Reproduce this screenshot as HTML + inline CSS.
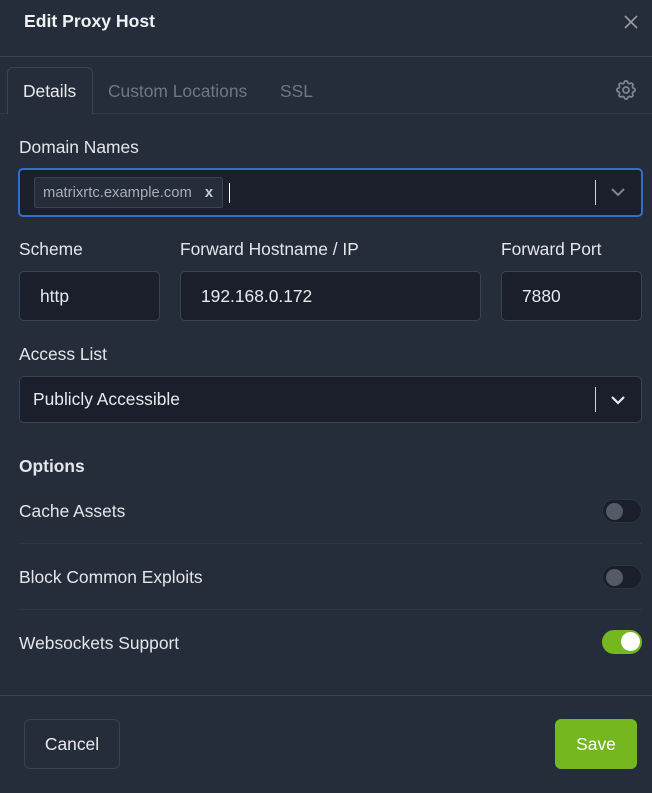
<!DOCTYPE html>
<html><head><style>
*{box-sizing:border-box;margin:0;padding:0}
body{width:652px;height:793px;background:#252d3a;font-family:"Liberation Sans",sans-serif;color:#e8eaed;position:relative;overflow:hidden;font-size:17.4px}
.a{position:absolute}
.inp{position:absolute;background:#1a1f2b;border:1px solid #3a4352;border-radius:5px;padding-left:20px;display:flex;align-items:center;font-size:17.4px}
.lbl{position:absolute;font-size:17.4px;color:#e3e6ea}
.tg{position:absolute;left:602px;width:40px;height:24px;border-radius:12px;background:#1a1f2b;border:1px solid #2c3442}
.tg::after{content:"";position:absolute;left:3px;top:3px;width:17px;height:17px;border-radius:50%;background:#555b66}
.tg.on{background:#74b71f;border-color:#74b71f}
.tg.on::after{left:18px;background:#fff;width:19px;height:19px;top:1px}
.sep{position:absolute;left:19px;right:10px;height:1px;background:#2f3745}
</style></head><body>
<div class="a" style="left:24px;top:11px;font-size:17.6px;font-weight:bold;color:#f0f2f4">Edit Proxy Host</div>
<svg class="a" style="left:623px;top:14px" width="16" height="16" viewBox="0 0 16 16"><path d="M2 2L14 14M14 2L2 14" stroke="#9aa0a8" stroke-width="1.6"/></svg>
<div class="a" style="left:0;top:56px;width:652px;height:1px;background:#3a4352"></div>
<div class="a" style="left:0;top:113px;width:652px;height:1px;background:#323a48"></div>
<div class="a" style="left:7px;top:67px;width:86px;height:47px;border:1px solid #3a4352;border-bottom:none;border-radius:6px 6px 0 0;background:#252d3a"></div>
<div class="a" style="left:23px;top:81px;color:#e8eaed">Details</div>
<div class="a" style="left:108px;top:81px;color:#6f7784">Custom Locations</div>
<div class="a" style="left:280px;top:81px;color:#6f7784">SSL</div>
<svg class="a" style="left:614px;top:78px" width="24" height="24" viewBox="0 0 24 24" fill="none" stroke="#7d8590" stroke-width="1.8"><path d="M10.3 4.3c.4-1.8 3-1.8 3.4 0a1.7 1.7 0 0 0 2.6 1.1c1.5-.9 3.3.8 2.4 2.4a1.7 1.7 0 0 0 1 2.5c1.8.4 1.8 3 0 3.4a1.7 1.7 0 0 0-1 2.6c.9 1.5-.9 3.3-2.4 2.4a1.7 1.7 0 0 0-2.6 1c-.4 1.800-3 1.8-3.4 0a1.7 1.7 0 0 0-2.6-1c-1.5.9-3.3-.9-2.4-2.4a1.7 1.7 0 0 0-1-2.600c-1.8-.4-1.8-3 0-3.4a1.7 1.7 0 0 0 1-2.5c-.9-1.6.9-3.3 2.4-2.4a1.7 1.7 0 0 0 2.6-1.100z"/><circle cx="12" cy="12" r="3"/></svg>
<div class="lbl" style="left:19px;top:137px">Domain Names</div>
<div class="inp" style="left:18px;top:168px;width:625px;height:49px;border:2px solid #2f6fcf;padding-left:14px">
 <div style="background:#252d3a;border:1px solid #3a4352;border-radius:2px;height:31px;padding:0 9px 0 8px;display:flex;align-items:center;font-size:14.8px;color:#a8aeb6">matrixrtc.example.com<span style="margin-left:13px;font-weight:bold;color:#c8ccd2">x</span></div>
 <div style="width:1px;height:20px;background:#fff;margin-left:6px"></div>
</div>
<div class="a" style="left:595px;top:180px;width:1px;height:25px;background:#d0d3d8"></div>
<svg class="a" style="left:610px;top:187px" width="16" height="10" viewBox="0 0 16 10"><path d="M2 2l6 6 6-6" stroke="#7d8590" stroke-width="2" fill="none"/></svg>
<div class="lbl" style="left:19px;top:239px">Scheme</div>
<div class="lbl" style="left:180px;top:239px">Forward Hostname / IP</div>
<div class="lbl" style="left:501px;top:239px">Forward Port</div>
<div class="inp" style="left:19px;top:271px;width:141px;height:50px">http</div>
<div class="inp" style="left:180px;top:271px;width:301px;height:50px">192.168.0.172</div>
<div class="inp" style="left:501px;top:271px;width:141px;height:50px">7880</div>
<div class="lbl" style="left:19px;top:344px">Access List</div>
<div class="inp" style="left:19px;top:376px;width:623px;height:47px;padding-left:13px">Publicly Accessible</div>
<div class="a" style="left:595px;top:387px;width:1px;height:25px;background:#d0d3d8"></div>
<svg class="a" style="left:610px;top:395px" width="16" height="10" viewBox="0 0 16 10"><path d="M2 2l6 6 6-6" stroke="#e8eaed" stroke-width="2.2" fill="none"/></svg>
<div class="lbl" style="left:19px;top:456px;font-weight:bold">Options</div>
<div class="lbl" style="left:19px;top:501px">Cache Assets</div>
<div class="tg" style="top:499px"></div>
<div class="sep" style="top:543px"></div>
<div class="lbl" style="left:19px;top:567px">Block Common Exploits</div>
<div class="tg" style="top:565px"></div>
<div class="sep" style="top:609px"></div>
<div class="lbl" style="left:19px;top:633px">Websockets Support</div>
<div class="tg on" style="top:630px"></div>
<div class="a" style="left:0;top:695px;width:652px;height:1px;background:#3a4352"></div>
<div class="a" style="left:24px;top:719px;width:96px;height:50px;border:1px solid #3a4352;border-radius:6px;display:flex;align-items:center;justify-content:center">Cancel</div>
<div class="a" style="left:555px;top:719px;width:82px;height:50px;background:#74b71f;border-radius:6px;display:flex;align-items:center;justify-content:center;color:#fff">Save</div>
</body></html>
